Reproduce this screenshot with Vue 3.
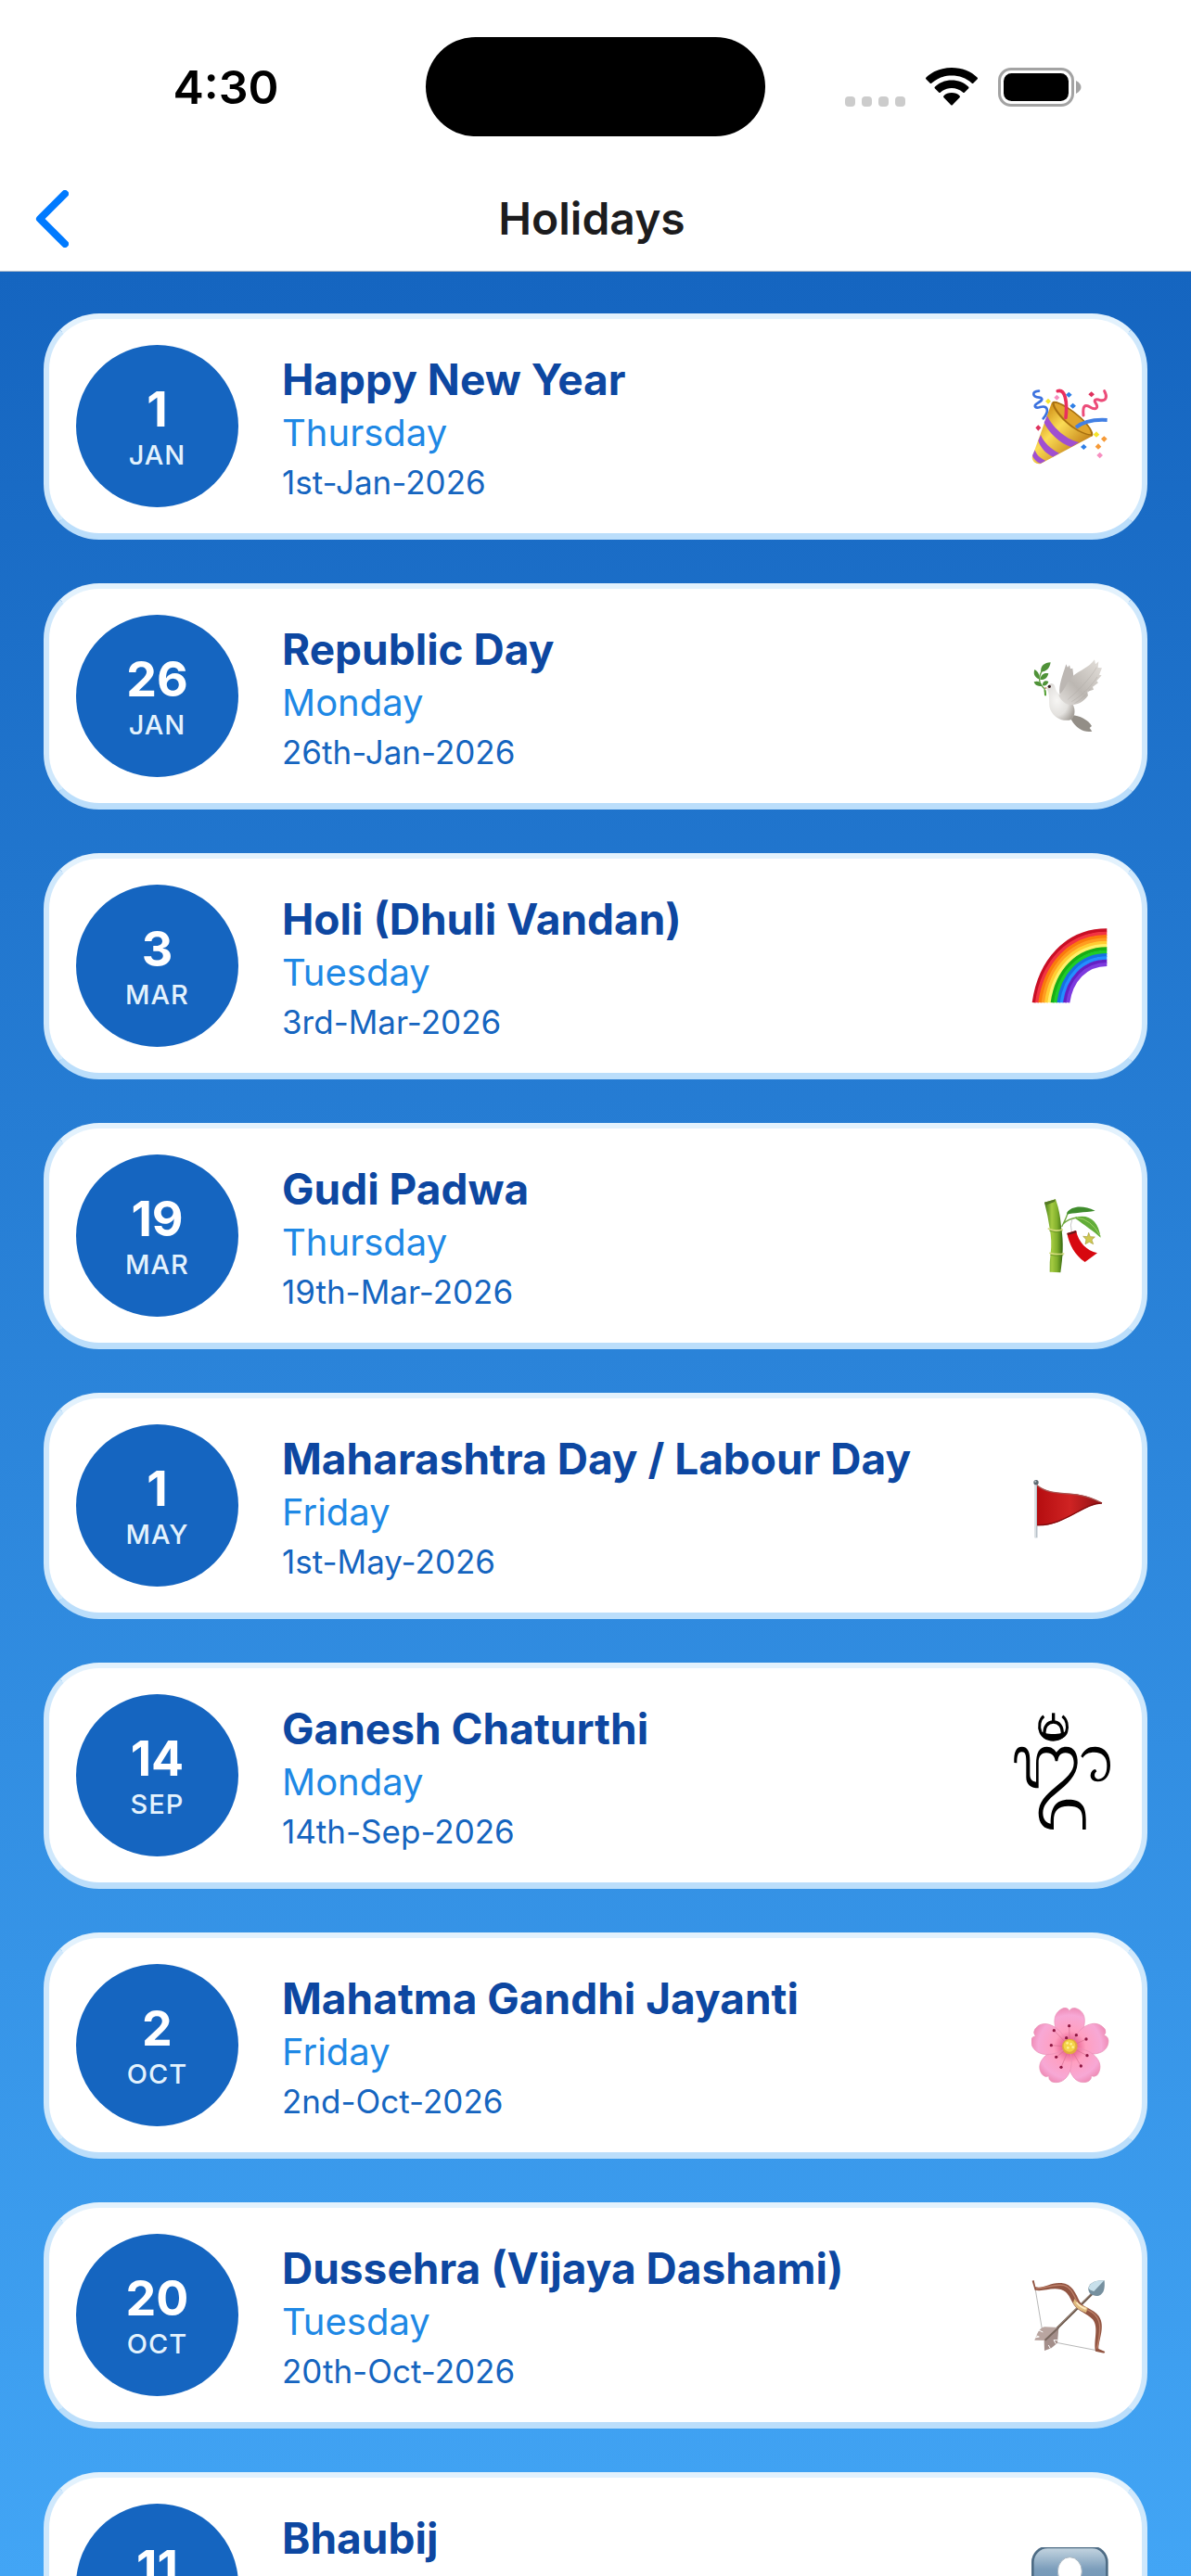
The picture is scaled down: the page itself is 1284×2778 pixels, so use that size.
<template>
  <div class="screen">
    <div class="status-bar">
      <time class="clock">4:30</time>
      <div class="island"></div>
      <div class="status-icons">
        <div class="signal"><i v-for="n in 4" :key="n"></i></div>
        <svg class="wifi" viewBox="0 0 56 41">
          <path d="M28 0C39 0 49 4 55.500 10.500Q56.500 11.500 55.500 12.500L51.500 16.500Q50.500 17.500 49.500 16.500C43.500 11 36 8.500 28 8.500S12.500 11 6.500 16.500Q5.500 17.500 4.500 16.500L.5 12.500Q-.5 11.500 .5 10.500C7 4 17 0 28 0Z" />
          <path d="M28 13.500C35 13.500 41.500 16 46 20.500Q47 21.500 46 22.500L42 26.500Q41 27.500 40 26.500C36.500 23.500 32.500 22 28 22S19.500 23.500 16 26.500Q15 27.500 14 26.500L10 22.500Q9 21.500 10 20.500C14.500 16 21 13.500 28 13.500Z" />
          <path d="M28 27C31.500 27 34.500 28.200 36.500 30.200Q37.500 31.200 36.500 32.200L29 40Q28 41 27 40L19.500 32.200Q18.500 31.200 19.500 30.200C21.500 28.200 24.500 27 28 27Z" />
        </svg>
        <svg class="battery" viewBox="0 0 90 42">
          <rect x="1.500" y="1.500" width="79" height="39" rx="12.500" fill="none" stroke="#a3a3a3" stroke-width="3" />
          <rect x="6" y="6" width="70" height="30" rx="8.500" />
          <path d="M84 14Q89.500 17 89.500 21T84 28Z" fill="#a3a3a3" />
        </svg>
      </div>
    </div>

    <header class="nav">
      <button class="back" type="button" aria-label="Back">
        <svg viewBox="0 0 36 62">
          <path d="M32 4L5 31L32 58" />
        </svg>
      </button>
      <h1>Holidays</h1>
    </header>

    <main class="content">
      <ul class="list">
        <li v-for="item in holidays" :key="item.name" class="card">
          <div class="badge">
            <strong>{{ item.day }}</strong>
            <span>{{ item.month }}</span>
          </div>
          <div class="info">
            <h2>{{ item.name }}</h2>
            <p class="weekday">{{ item.weekday }}</p>
            <p class="date">{{ item.date }}</p>
          </div>

          <svg v-if="item.icon === 'party'" class="icon" viewBox="96 90 258 246">
            <defs>
              <linearGradient id="cone" x1="0" y1="0" x2="1" y2="1">
                <stop offset="0.200" stop-color="#d79a20" />
                <stop offset="0.420" stop-color="#fbdc55" />
                <stop offset="0.750" stop-color="#c98a1e" />
              </linearGradient>
            </defs>
            <path d="M163 134C172 122 220 150 256 182C282 206 300 232 294 243C284 252 240 236 205 204C176 178 156 146 163 134Z" fill="#a8700f" />
            <path d="M170 137C185 136 225 160 252 185C274 205 290 226 288 238C266 236 238 220 212 197C190 176 170 150 170 137Z" fill="#e0a52d" />
            <path d="M162 134C164 166 232 238 294 243L126 333C112 336 98 326 98 312Z" fill="url(#cone)" />
            <path d="M147 178C160 210 205 255 250 264L224 279C190 268 150 232 137 200ZM126 240C134 262 158 286 186 299L165 311C144 302 124 280 118 259ZM107 289C112 304 124 316 142 323L126 332C114 330 101 316 99 307Z" fill="#a04fd0" />
            <path d="M181 98C204 92 213 128 207 184" fill="none" stroke="#e92f5e" stroke-width="11" stroke-linecap="round" />
            <path d="M240 216C262 198 292 189 341 192" fill="none" stroke="#4280e4" stroke-width="12" />
            <path d="M120 98C96 100 98 116 121 119C139 122 127 131 113 139C101 147 109 155 124 150C146 144 157 159 134 187" fill="none" stroke="#3c72df" stroke-width="8" stroke-linecap="round" />
            <path d="M264 177C261 146 268 141 284 149C306 162 314 152 303 136C296 126 305 123 318 128C340 132 341 114 332 98" fill="none" stroke="#ec4c79" stroke-width="9" stroke-linecap="round" />
            <path d="M217 101l10 9-10 9-10-9ZM230 137l10 9-10 9-10-9ZM265 270l10 9-10 9-10-9Z" fill="#2f7fe6" />
            <path d="M178 110l9 9-9 9-9-9ZM317 296l10 10-10 10-10-10Z" fill="#f78fc0" />
            <path d="M290 100l10 9-10 9-10-9ZM118 208l9 9-9 10-9-10Z" fill="#de315d" />
            <path d="M150 122l9 9-9 9-9-9ZM306 229l10 10-10 9-10-9Z" fill="#f6e52d" />
            <path d="M331 244l10 9-10 10-10-10ZM312 268l10 10-10 9-10-9Z" fill="#f69a37" />
          </svg>

          <svg v-else-if="item.icon === 'dove'" class="icon" viewBox="96 92 258 246">
            <defs>
              <linearGradient id="wing" x1="1" y1="0" x2="0" y2="1">
                <stop offset="0" stop-color="#e5e1dc" />
                <stop offset="0.600" stop-color="#bcb7b2" />
                <stop offset="1" stop-color="#e3e0dd" />
              </linearGradient>
              <radialGradient id="breast" cx="0.350" cy="0.450" r="0.700">
                <stop offset="0" stop-color="#f7f6f4" />
                <stop offset="0.600" stop-color="#e3e1de" />
                <stop offset="1" stop-color="#a7a29c" />
              </radialGradient>
            </defs>
            <path d="M187 207C184 177 196 150 208 111L213 121L219 114L222 126L229 124L232 150L218 213Z" fill="#bcb7b3" />
            <path d="M226 276C252 277 280 291 291 311L284 317L292 328C270 334 241 320 225 291Z" fill="#938e87" />
            <path d="M148 194C145 172 170 165 173 187C177 207 193 211 215 224C237 239 243 273 225 290C200 298 171 287 158 260C149 242 158 218 148 194Z" fill="url(#breast)" />
            <path d="M184 211C204 195 209 171 230 149C253 130 281 123 300 96L303 111L313 102L311 122L324 123L315 145L323 147L307 165L312 171L294 184L297 193L276 200L279 212C264 234 247 241 224 243C205 241 190 227 184 211Z" fill="url(#wing)" />
            <path d="M214 225C245 199 281 163 307 121M226 232C256 214 285 188 309 152M235 238Q265 221 287 190" fill="none" stroke="#aaa49e" stroke-width="2" opacity="0.600" />
            <circle cx="154" cy="183" r="5" fill="#382323" />
            <path d="M145 184L135 188L145 192Z" fill="#cf8c79" />
            <path d="M142 213L138 190C119 174 118 153 130 132" fill="none" stroke="#62a043" stroke-width="4" />
            <path d="M127 136C124 116 138 106 158 105C155 124 145 135 127 136ZM120 159C104 152 102 140 106 128C120 136 124 149 120 159ZM124 161C126 143 139 137 151 141C148 155 139 163 124 161ZM131 181C117 184 107 179 104 168C116 164 127 168 131 181ZM132 180C131 167 141 162 151 167C148 177 142 182 132 180Z" fill="#4f9238" />
            <path d="M140 195L141 212" stroke="#56a137" stroke-width="6" />
          </svg>

          <svg v-else-if="item.icon === 'rainbow'" class="icon" viewBox="96 94 258 246">
            <g fill="none">
              <path v-for="band in bands" :key="band.r" :d="arc(band.r)" :stroke="band.color" stroke-width="12" />
            </g>
          </svg>

          <svg v-else-if="item.icon === 'bamboo'" class="icon" viewBox="96 95 258 246">
            <defs>
              <linearGradient id="stem">
                <stop offset="0" stop-color="#437d18" />
                <stop offset="0.400" stop-color="#a5cb41" />
                <stop offset="0.700" stop-color="#7fae2b" />
                <stop offset="1" stop-color="#35670f" />
              </linearGradient>
            </defs>
            <path d="M138 109L174 99C187 135 190 164 193 194C200 240 198 282 190 336L155 334Q154 301 158 274Q163 232 155 193Q149 150 138 109Z" fill="url(#stem)" />
            <path d="M138 109L174 99L171 107L142 118Z" fill="#557925" />
            <path d="M151 194Q174 205 196 197M156 273Q178 279 200 275" fill="none" stroke="#d2d97b" stroke-width="5" stroke-linecap="round" />
            <path d="M153 200Q174 210 196 202M157 279Q178 285 199 280" fill="none" stroke="#5c8b21" stroke-width="2" />
            <path d="M194 188Q207 164 216 138M198 179Q215 162 243 158" fill="none" stroke="#6fa83d" stroke-width="4" />
            <path d="M211 142C225 121 261 116 302 136C267 142 231 142 211 148Z" fill="#3f8c2d" />
            <path d="M238 157C281 145 313 168 320 223C298 203 266 182 238 161Z" fill="#62ad39" />
            <path d="M242 158Q288 163 318 216" fill="none" stroke="#9ed264" stroke-width="3" />
            <path d="M228 163Q219 182 226 202" fill="none" stroke="#c7c7c7" stroke-width="3" />
            <path d="M211 209L240 200C248 237 274 266 309 273L269 302C235 278 219 247 211 209Z" fill="#d7080f" />
            <path d="M211 209L240 200L242 207L213 215Z" fill="#67191a" />
            <path d="M281 207L286 220L301 221L291 230L296 244L283 237L270 244L273 229L263 219L277 220Z" fill="#cfc84f" stroke="#a29c38" stroke-width="2" />
          </svg>

          <svg v-else-if="item.icon === 'flag'" class="icon" viewBox="96 67 258 246">
            <defs>
              <linearGradient id="flag">
                <stop offset="0" stop-color="#b50d10" />
                <stop offset="0.500" stop-color="#cf2323" />
                <stop offset="1" stop-color="#8e1214" />
              </linearGradient>
            </defs>
            <path d="M111 119V293" stroke="#b8c1c8" stroke-width="9" />
            <path d="M109 119V293" stroke="#dfe5e9" stroke-width="3" />
            <circle cx="111" cy="114" r="8" fill="#5d6970" />
            <circle cx="109" cy="111" r="3" fill="#b4c1c8" />
            <path d="M114 122C151 155 207 146 251 154C282 159 300 168 326 181C263 183 204 256 114 254Z" fill="url(#flag)" />
            <path d="M115 124C151 155 207 147 251 155Q285 160 322 180" fill="none" stroke="#a85552" stroke-width="4" />
            <path d="M115 252C204 254 263 181 324 181" fill="none" stroke="#820b0d" stroke-width="4" />
          </svg>

          <svg v-else-if="item.icon === 'om'" class="icon om" viewBox="66 45 318 414">
            <g fill="none" stroke="#000" stroke-width="10">
              <path d="M197 49V76" />
              <path d="M166 59C152 69 148 94 156 112C166 140 229 140 239 110C245 91 240 69 226 59" stroke-width="9" />
              <path d="M168 119C166 92 179 78 197 78S227 92 226 119" />
            </g>
            <path d="M156 106C164 121 229 121 237 106C239 126 221 140 197 140S154 128 156 106Z" />
            <path d="M70 210C69 176 76 158 95 158C115 158 121 177 121 202V247C121 261 126 270 141 272V214C141 178 151 158 176 158C191 158 200 167 207 176C216 164 224 158 238 158C265 158 276 181 275 211C273 252 241 281 210 305C177 331 163 350 163 372C163 393 174 405 188 407C188 355 203 329 246 329C288 329 302 351 302 392V426H291V391C291 362 279 350 246 350C211 350 198 366 198 397V426C165 426 149 407 149 372C149 338 172 314 204 288C238 261 263 239 263 211C263 189 253 178 236 178C219 178 213 189 211 205H203C201 189 193 178 174 178C156 178 149 190 149 211V292C124 292 109 280 109 257V205C109 184 106 175 95 175C82 175 79 189 79 211Z" />
            <path d="M286 189C296 166 312 157 334 158C365 159 382 184 381 219C380 252 365 271 340 271C325 271 316 261 317 250C318 239 324 232 333 231L337 238C326 245 329 262 342 263C360 263 370 246 370 220C371 191 354 176 329 176C311 176 299 182 292 194Z" />
          </svg>

          <svg v-else-if="item.icon === 'blossom'" class="icon" viewBox="96 101 258 246">
            <defs>
              <radialGradient id="petal" gradientUnits="userSpaceOnUse" cx="220" cy="228" r="128">
                <stop offset="0.100" stop-color="#e45588" />
                <stop offset="0.400" stop-color="#ff9fc0" />
                <stop offset="0.800" stop-color="#f7a8d5" />
                <stop offset="1" stop-color="#ee8ab4" />
              </radialGradient>
            </defs>
            <g v-for="n in 5" :key="n" :transform="`rotate(${(n - 1) * 72} 220 228)`">
              <path d="M216 222C190 201 167 172 171 139C173 120 186 107 202 102Q214 101 219 112Q225 100 239 103C256 108 268 122 268 142C269 173 249 203 222 222Z" fill="url(#petal)" stroke="#e990b6" stroke-width="2" />
            </g>
            <g stroke="#d4708f" stroke-width="2">
              <path v-for="[x, y] in stamens" :key="x" :d="`M220 228L${x} ${y}`" />
            </g>
            <circle v-for="[x, y] in stamens" :key="y" :cx="x" :cy="y" r="5" fill="#8e1742" />
            <circle cx="220" cy="227" r="25" fill="#e1aa3e" />
            <circle cx="219" cy="225" r="19" fill="#f4d448" />
            <g fill="#fff194">
              <circle cx="212" cy="216" r="4" />
              <circle cx="224" cy="219" r="4" />
              <circle cx="214" cy="231" r="4" />
              <circle cx="230" cy="229" r="4" />
            </g>
          </svg>

          <svg v-else-if="item.icon === 'bow'" class="icon" viewBox="96 88 258 246">
            <path d="M108 123L132 266M177 299L312 325" stroke="#b8b8b8" stroke-width="3" />
            <path d="M140 291L296 137" stroke="#695548" stroke-width="8" />
            <path d="M142 287L294 137" stroke="#9b877a" stroke-width="3" />
            <path d="M98 99L104 97L109 119C137 125 155 103 193 106C228 109 239 140 252 166C263 187 296 188 314 213C336 247 313 287 313 319L334 328L331 333L303 327C296 291 315 251 294 224C275 204 247 197 234 178C220 157 217 135 191 127C158 120 133 135 107 129Z" fill="#925542" />
            <path d="M111 125C151 121 174 108 201 114C226 120 234 150 245 169M266 189C296 198 315 218 317 247Q317 280 308 318" fill="none" stroke="#bd806a" stroke-width="4" />
            <path d="M235 157C244 171 258 181 278 186L273 202C254 197 239 187 231 170Z" fill="#dfbb80" />
            <path d="M242 169Q254 184 272 190" fill="none" stroke="#ffecc1" stroke-width="6" />
            <path d="M332 98C301 95 280 109 280 125C280 143 297 150 314 147C331 141 334 122 332 98Z" fill="#76909f" />
            <path d="M331 98C301 95 282 109 281 124Q285 130 298 133Z" fill="#c8e0eb" />
            <path d="M106 291C115 270 119 253 138 248L184 250L144 292Z" fill="#b9a5a0" />
            <path d="M137 293L184 250L180 300L160 317L138 325Z" fill="#a38e8a" />
            <path d="M107 283L121 280L110 276M118 258L133 265M181 291L168 291L175 303M157 318L151 307" fill="none" stroke="#fff" stroke-width="3" />
            <path d="M140 291L184 250" stroke="#78665d" stroke-width="6" />
          </svg>

          <svg v-else class="icon" viewBox="96 94 258 246">
            <defs>
              <linearGradient id="tile" x1="0" y1="0" x2="0" y2="1">
                <stop offset="0" stop-color="#c6d6e1" />
                <stop offset="0.300" stop-color="#7b9dbb" />
                <stop offset="1" stop-color="#5d84a8" />
              </linearGradient>
            </defs>
            <rect x="100" y="94" width="240" height="240" rx="48" fill="url(#tile)" stroke="#4e6c85" stroke-width="8" />
            <ellipse cx="220" cy="172" rx="39" ry="46" fill="#fff" stroke="#a9b6c0" stroke-width="3" />
            <path d="M140 296C140 248 177 234 220 234S300 248 300 296Z" fill="#fff" />
          </svg>
        </li>
      </ul>
    </main>
  </div>
</template>

<script setup>
const holidays = [
  { day: 1, month: 'JAN', name: 'Happy New Year', weekday: 'Thursday', date: '1st-Jan-2026', icon: 'party' },
  { day: 26, month: 'JAN', name: 'Republic Day', weekday: 'Monday', date: '26th-Jan-2026', icon: 'dove' },
  { day: 3, month: 'MAR', name: 'Holi (Dhuli Vandan)', weekday: 'Tuesday', date: '3rd-Mar-2026', icon: 'rainbow' },
  { day: 19, month: 'MAR', name: 'Gudi Padwa', weekday: 'Thursday', date: '19th-Mar-2026', icon: 'bamboo' },
  { day: 1, month: 'MAY', name: 'Maharashtra Day / Labour Day', weekday: 'Friday', date: '1st-May-2026', icon: 'flag' },
  { day: 14, month: 'SEP', name: 'Ganesh Chaturthi', weekday: 'Monday', date: '14th-Sep-2026', icon: 'om' },
  { day: 2, month: 'OCT', name: 'Mahatma Gandhi Jayanti', weekday: 'Friday', date: '2nd-Oct-2026', icon: 'blossom' },
  { day: 20, month: 'OCT', name: 'Dussehra (Vijaya Dashami)', weekday: 'Tuesday', date: '20th-Oct-2026', icon: 'bow' },
  { day: 11, month: 'NOV', name: 'Bhaubij', weekday: 'Wednesday', date: '11th-Nov-2026', icon: 'person' },
]

const bands = [
  { r: 0, color: '#c90f25' },
  { r: 10, color: '#f33342' },
  { r: 20, color: '#fa7b0b' },
  { r: 30, color: '#ff9d20' },
  { r: 40, color: '#ffcd32' },
  { r: 50, color: '#fff06a' },
  { r: 60, color: '#18ad15' },
  { r: 70, color: '#1fcc27' },
  { r: 80, color: '#176fe3' },
  { r: 90, color: '#238fff' },
  { r: 100, color: '#6420c4' },
  { r: 110, color: '#7d3bdf' },
]

// quarter turn of one colour band, inset from the outer edge
const arc = (inset) => {
  const x = 104 + inset
  const y = 101 + inset
  const w = 340 - x
  const h = 335 - y
  return `M${x} 335C${x + w * 0.08} ${335 - h * 0.58} ${340 - w * 0.55} ${y} 340 ${y}`
}

const stamens = [
  [218, 160], [169, 175], [241, 190], [273, 203], [160, 223],
  [276, 256], [256, 290], [192, 294], [176, 261], [209, 199],
]
</script>

<style>
body {
  margin: 0;
}
</style>

<style scoped>
.screen {
  display: flex;
  flex-direction: column;
  height: 100vh;
  background: #fff;
  font-family: Inter, 'Liberation Sans', sans-serif;
}

.status-bar {
  display: grid;
  grid-template-columns: 1fr 366px 1fr;
  align-items: center;
  height: 187px;
  flex-shrink: 0;
}

.clock {
  padding-left: 28px;
  text-align: center;
  font-size: 50px;
  line-height: 60px;
  font-weight: 600;
}

.island {
  height: 107px;
  border-radius: 54px;
  background: #000;
}

.status-icons {
  display: flex;
  align-items: center;
  justify-content: flex-end;
  padding-right: 118px;
}

.signal {
  display: flex;
  align-self: flex-end;
  gap: 7px;
  margin-right: 22px;
}

.signal i {
  width: 11px;
  height: 11px;
  border-radius: 4px;
  background: #ccc;
}

.wifi {
  width: 56px;
  height: 41px;
  margin-right: 22px;
}

.battery {
  width: 90px;
  height: 42px;
}

.nav {
  display: grid;
  grid-template-columns: 104px 1fr 112px;
  align-items: center;
  box-sizing: border-box;
  height: 106px;
  flex-shrink: 0;
  padding-bottom: 8px;
  border-bottom: 1px solid #b5bfcc;
}

.back {
  display: flex;
  padding: 0 0 0 38px;
  border: 0;
  background: none;
  cursor: pointer;
}

.back svg {
  width: 36px;
  height: 62px;
  fill: none;
  stroke: #007aff;
  stroke-width: 8;
  stroke-linecap: round;
  stroke-linejoin: round;
}

h1 {
  margin: 0;
  text-align: center;
  font-size: 48px;
  line-height: 60px;
  font-weight: 600;
  color: #1c1c1e;
}

.content {
  flex: 1;
  min-height: 0;
  overflow-y: auto;
  scrollbar-width: none;
  background: linear-gradient(#1565c0, #42a5f5);
}

.list {
  display: flex;
  flex-direction: column;
  gap: 47px;
  margin: 0;
  padding: 45px 47px;
  list-style: none;
}

.card {
  display: flex;
  align-items: center;
  padding: 28px 33px 28px 29px;
  border: 6px solid #cfe8fc;
  border-top-color: #e3f2fd;
  border-bottom: 7px solid #bbdefb;
  border-radius: 60px;
  background: #fff;
}

.badge {
  display: flex;
  flex-direction: column;
  align-items: center;
  justify-content: center;
  gap: 2px;
  flex-shrink: 0;
  width: 175px;
  height: 175px;
  border-radius: 50%;
  background: #1565c0;
}

.badge strong {
  font-size: 52px;
  line-height: 60px;
  font-weight: 700;
  color: #fff;
}

.badge span {
  font-size: 29px;
  line-height: 34px;
  font-weight: 500;
  letter-spacing: 1px;
  color: #e3f2fd;
}

.info {
  flex: 1;
  min-width: 0;
  margin-left: 47px;
  padding-top: 4px;
}

h2 {
  margin: 0;
  font-size: 46px;
  line-height: 58px;
  font-weight: 700;
  color: #0d47a1;
}

.weekday {
  margin: 0;
  font-size: 40px;
  line-height: 58px;
  color: #1e88e5;
}

.date {
  margin: 0;
  font-size: 35px;
  line-height: 48px;
  color: #1565c0;
}

.icon {
  flex-shrink: 0;
  width: 86px;
  height: 82px;
}

.om {
  width: 106px;
  height: 138px;
}
</style>
